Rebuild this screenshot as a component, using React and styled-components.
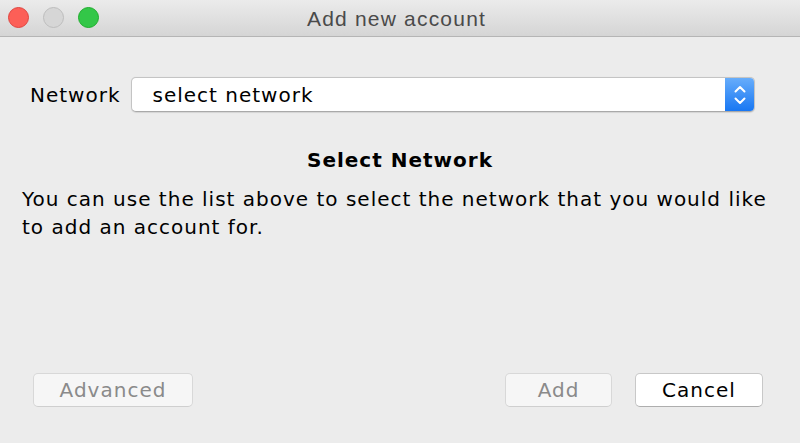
import React from "react";
import styled, { createGlobalStyle } from "styled-components";

const Global = createGlobalStyle`
  html, body { margin: 0; padding: 0; background: #ececec; }
  * { box-sizing: border-box; }
`;

const Window = styled.div`
  width: 800px;
  height: 443px;
  display: flex;
  flex-direction: column;
  background: #ececec;
  font-family: "DejaVu Sans", Verdana, sans-serif;
  font-size: 20px;
  letter-spacing: 1px;
  color: #000;
`;

const TitleBar = styled.div`
  height: 37px;
  flex: none;
  position: relative;
  display: flex;
  align-items: center;
  justify-content: center;
  background: linear-gradient(#ebebeb, #d5d5d5);
  border-bottom: 1px solid #b5b5b5;
`;

const Lights = styled.div`
  position: absolute;
  left: 8px;
  top: 7px;
  display: flex;
  gap: 14px;
`;

const Light = styled.span`
  width: 21px;
  height: 21px;
  border-radius: 50%;
  background: ${(p) => p.$bg};
  border: 1px solid ${(p) => p.$border};
`;

const Title = styled.div`
  font-family: "Liberation Sans", Arial, sans-serif;
  font-size: 21px;
  letter-spacing: 1.2px;
  color: #4a4a4a;
  margin-left: -7px;
  padding-top: 1px;
`;

const Body = styled.div`
  flex: 1;
  display: flex;
  flex-direction: column;
  padding: 40px 22px 0 22px;
`;

const Row = styled.div`
  display: flex;
  align-items: center;
  gap: 10px;
  padding-left: 8px;
  padding-right: 23px;
`;

const Label = styled.span``;

const Select = styled.div`
  flex: 1;
  height: 35px;
  display: flex;
  align-items: stretch;
  background: #fff;
  border: 1px solid #c4c4c4;
  border-bottom-color: #a9a9a9;
  border-radius: 5px;
  overflow: hidden;
  box-shadow: 0 0.5px 1px rgba(0, 0, 0, 0.1);
`;

const SelectText = styled.span`
  flex: 1;
  display: flex;
  align-items: center;
  padding-left: 21px;
`;

const Stepper = styled.span`
  width: 29px;
  display: flex;
  align-items: center;
  justify-content: center;
  background: linear-gradient(#67adfb, #1877f3);
`;

const Heading = styled.div`
  margin-top: 36px;
  text-align: center;
  font-weight: bold;
`;

const Text = styled.p`
  margin: 13px 0 0 0;
  line-height: 28px;
`;

const Footer = styled.div`
  margin-top: auto;
  display: flex;
  align-items: center;
  padding: 0 37px 36px 33px;
  gap: 23px;
`;

const Button = styled.button`
  height: 34px;
  width: ${(p) => p.$w}px;
  margin-left: ${(p) => (p.$push ? "auto" : "0")};
  font-family: "DejaVu Sans", Verdana, sans-serif;
  font-size: 20px;
  letter-spacing: 1px;
  color: ${(p) => (p.disabled ? "#8a8a8a" : "#000")};
  background: ${(p) => (p.disabled ? "#f6f6f6" : "#fff")};
  border: 1px solid ${(p) => (p.disabled ? "#d8d8d8" : "#c8c8c8")};
  border-bottom-color: ${(p) => (p.disabled ? "#cfcfcf" : "#aeaeae")};
  border-radius: 5px;
  padding: 0;
`;

export default function App() {
  return (
    <Window>
      <Global />
      <TitleBar>
        <Lights>
          <Light $bg="#fc5f57" $border="#e0443e" />
          <Light $bg="#d6d6d6" $border="#bdbdbd" />
          <Light $bg="#33c748" $border="#1dad2b" />
        </Lights>
        <Title>Add new account</Title>
      </TitleBar>
      <Body>
        <Row>
          <Label>Network</Label>
          <Select>
            <SelectText>select network</SelectText>
            <Stepper>
              <svg width="14" height="22" viewBox="0 0 14 22" fill="none" stroke="#fff" strokeWidth="2" strokeLinecap="round" strokeLinejoin="round">
                <path d="M2.5 7.5 L7 3 L11.5 7.5" />
                <path d="M2.5 14.5 L7 19 L11.5 14.5" />
              </svg>
            </Stepper>
          </Select>
        </Row>
        <Heading>Select Network</Heading>
        <Text>
          You can use the list above to select the network that you would like to add an account for.
        </Text>
      </Body>
      <Footer>
        <Button disabled $w={160}>Advanced</Button>
        <Button disabled $w={107} $push>Add</Button>
        <Button $w={128}>Cancel</Button>
      </Footer>
    </Window>
  );
}
